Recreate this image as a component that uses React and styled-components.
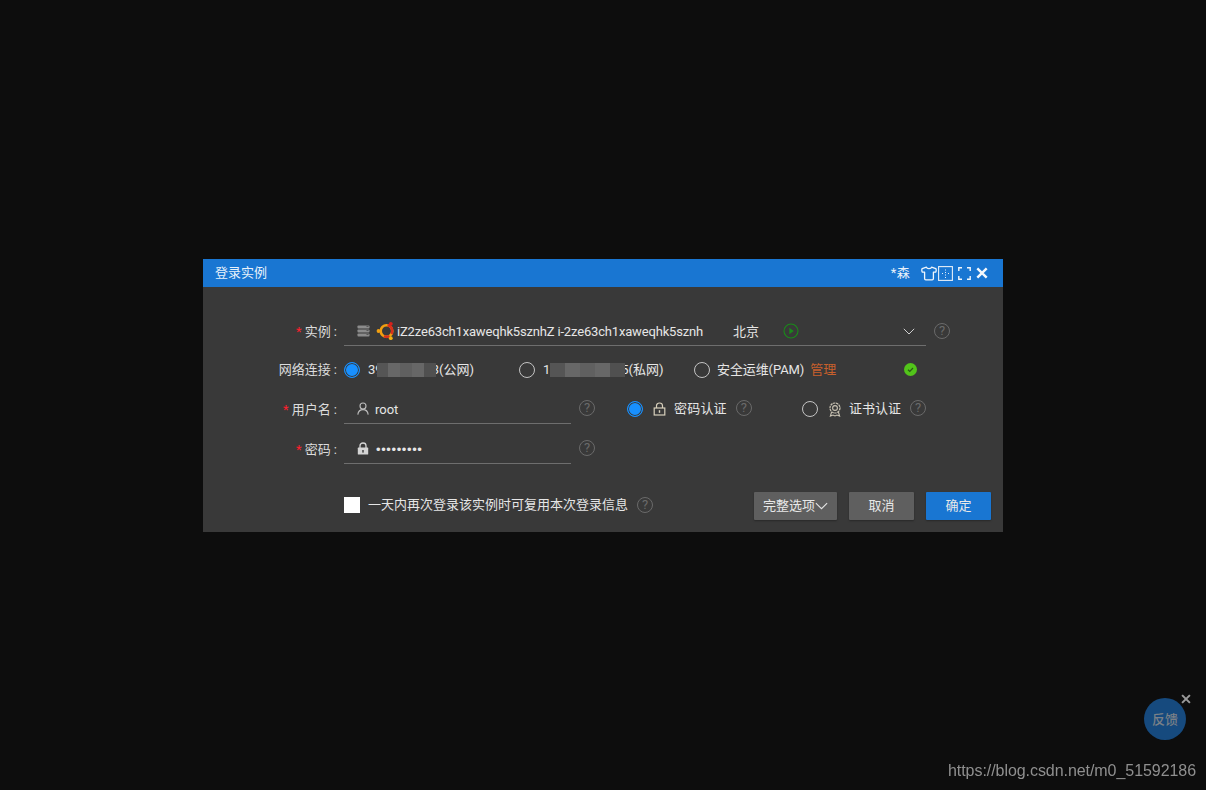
import React from "react";
import styled, { createGlobalStyle } from "styled-components";

const GlobalStyle = createGlobalStyle`
    html, body {
        margin: 0;
        padding: 0;
        height: 100%;
        background: #0d0d0d;
    }
    body {
        font-family: Roboto, "Noto Sans CJK SC", sans-serif;
        font-size: 13px;
        line-height: 18px;
        color: #e6e6e6;
    }
`;

const ServerIcon = () => (
    <svg width="13" height="12" viewBox="0 0 13 12">
        <rect x="0.5" y="0.5" width="12" height="3" rx="0.8" fill="#8c8c8c" />
        <rect x="0.5" y="4.5" width="12" height="3" rx="0.8" fill="#8c8c8c" />
        <rect x="0.5" y="8.5" width="12" height="3" rx="0.8" fill="#8c8c8c" />
        <path d="M9.5 1.5 h2 M9.5 5.5 h2 M9.5 9.5 h2" stroke="#4a4a4a" strokeWidth="0.8" />
    </svg>
);

const UbuntuIcon = () => (
    <svg width="20" height="20" viewBox="0 0 20 20">
        <circle cx="10.5" cy="10" r="5.8" fill="none" stroke="#f29f10" strokeWidth="2.6" />
        <path d="M11.5 4.3 A5.8 5.8 0 0 1 15.5 13" fill="none" stroke="#d8301c" strokeWidth="2.6" />
        <path d="M8 15.2 A5.8 5.8 0 0 0 13.5 15" fill="none" stroke="#d8301c" strokeWidth="2.6" />
        <circle cx="2.5" cy="10" r="1.9" fill="#f29f10" />
        <circle cx="14.8" cy="2.8" r="1.9" fill="#d8201c" />
        <circle cx="14.8" cy="17.2" r="1.9" fill="#f2b010" />
    </svg>
);

const PlayIcon = () => (
    <svg width="16" height="16" viewBox="0 0 16 16">
        <circle cx="8" cy="8" r="7" fill="none" stroke="#1a8a1a" strokeWidth="1.1" />
        <path d="M6.3 4.8 L10.8 8 L6.3 11.2 Z" fill="#1a8a1a" />
    </svg>
);

const Chevron = ({ size = 12, color = "#cfcfcf" }) => (
    <svg width={size} height={Math.round(size * 0.6)} viewBox="0 0 12 7">
        <path d="M0.8 0.8 L6 6 L11.2 0.8" fill="none" stroke={color} strokeWidth="1" />
    </svg>
);

const UserIcon = () => (
    <svg width="12" height="13" viewBox="0 0 12 13">
        <circle cx="6" cy="4" r="3" fill="none" stroke="#bdbdbd" strokeWidth="1.1" />
        <path d="M0.8 12.6 C1.2 9.6 3.2 7.6 6 7.6 C8.8 7.6 10.8 9.6 11.2 12.6" fill="none" stroke="#bdbdbd" strokeWidth="1.1" />
    </svg>
);

const SolidLock = () => (
    <svg width="12" height="13" viewBox="0 0 12 13">
        <path d="M3 6 V3.8 C3 2 4.3 1 6 1 C7.7 1 9 2 9 3.8 V6" fill="none" stroke="#d4d4d4" strokeWidth="1.3" />
        <rect x="0.8" y="5.6" width="10.4" height="7" rx="0.6" fill="#d4d4d4" />
        <rect x="5.3" y="8" width="1.4" height="2.6" fill="#393939" />
    </svg>
);

const OutlineLock = () => (
    <svg width="13" height="14" viewBox="0 0 13 14">
        <path d="M3.5 6 V3.8 C3.5 2 4.8 1 6.5 1 C8.2 1 9.5 2 9.5 3.8 V6" fill="none" stroke="#d8d0bc" strokeWidth="1.2" />
        <rect x="1.2" y="6" width="10.6" height="7" fill="none" stroke="#d8d0bc" strokeWidth="1.2" />
        <rect x="5.8" y="8.2" width="1.4" height="2.6" fill="#d8d0bc" />
    </svg>
);

const CertIcon = () => (
    <svg width="14" height="15" viewBox="0 0 14 15">
        <circle cx="7" cy="6" r="5" fill="none" stroke="#c8c2b2" strokeWidth="1.2" strokeDasharray="2.4 0.6" />
        <circle cx="7" cy="6" r="2.4" fill="none" stroke="#c8c2b2" strokeWidth="1.1" />
        <path d="M3.6 10 L2.4 14 L5 13 L7 14 L9 13 L11.6 14 L10.4 10" fill="none" stroke="#c8c2b2" strokeWidth="1.1" />
    </svg>
);

const CheckBadge = () => (
    <BadgeSlot>
        <svg width="13" height="13" viewBox="0 0 13 13">
            <circle cx="6.5" cy="6.5" r="6.5" fill="#52c41a" />
            <path d="M4 6.7 L5.8 8.4 L9 5" fill="none" stroke="#2a5a14" strokeWidth="1.2" />
        </svg>
    </BadgeSlot>
);

const ShirtIcon = () => (
    <svg width="16" height="15" viewBox="0 0 16 15">
        <path d="M5.4 1.2 C6 3 10 3 10.6 1.2 L14.8 2.6 C15.4 3 15.3 5.4 14.6 6.2 L12.4 6.2 V12.6 C12.4 13.4 12 13.8 11.2 13.8 H4.8 C4 13.8 3.6 13.4 3.6 12.6 V6.2 L1.4 6.2 C0.7 5.4 0.6 3 1.2 2.6 Z" fill="none" stroke="#f0f6fc" strokeWidth="1.3" strokeLinejoin="round" />
    </svg>
);

const GridIcon = () => (
    <svg width="15" height="15" viewBox="0 0 15 15">
        <rect x="0.6" y="0.6" width="13.8" height="13.8" fill="none" stroke="#e4eef8" strokeWidth="1.1" />
        <path d="M7 3.5 h1 v1 h-1 z M7 6 h1 v1 h-1 z M7 8.5 h1 v1 h-1 z M7 11 h1 v1 h-1 z M4 7 h1 v1 h-1 z M10 7 h1 v1 h-1 z" fill="#e4eef8" />
    </svg>
);

const FullscreenIcon = () => (
    <svg width="13" height="13" viewBox="0 0 13 13">
        <path d="M0.8 4 V0.8 H4 M9 0.8 H12.2 V4 M12.2 9 V12.2 H9 M4 12.2 H0.8 V9" fill="none" stroke="#f0f6fc" strokeWidth="1.4" />
    </svg>
);

const CloseIcon = ({ size = 12, color = "#f4f8fc" }) => (
    <svg width={size} height={size} viewBox="0 0 11 11">
        <path d="M1.2 1.2 L9.8 9.8 M9.8 1.2 L1.2 9.8" fill="none" stroke={color} strokeWidth="2.2" />
    </svg>
);

const Help = () => <HelpMark>?</HelpMark>;

const App = () => {
    return (
        <>
            <GlobalStyle />
            <Page>
                <Dialog>
                    <TitleBar>
                        <Title>登录实例</Title>
                        <TitleTools>
                            <Nickname>*森</Nickname>
                            <ToolSlot $left={11}><ShirtIcon /></ToolSlot>
                            <ToolSlot $left={1}><GridIcon /></ToolSlot>
                            <ToolSlot $left={5}><FullscreenIcon /></ToolSlot>
                            <ToolSlot $left={5}><CloseIcon /></ToolSlot>
                        </TitleTools>
                    </TitleBar>
                    <Body>
                        <Row $height={29}>
                            <Label $required>实例</Label>
                            <Field $width={582}>
                                <ServerIcon />
                                <UbuntuSlot><UbuntuIcon /></UbuntuSlot>
                                <InstanceName>iZ2ze63ch1xaweqhk5sznhZ i-2ze63ch1xaweqhk5sznh</InstanceName>
                                <Region>北京</Region>
                                <PlayIcon />
                                <ChevronSlot><Chevron /></ChevronSlot>
                            </Field>
                            <HelpSlot><Help /></HelpSlot>
                        </Row>
                        <Row $height={48}>
                            <Label>网络连接</Label>
                            <Option $width={175}>
                                <Radio $checked />
                                <OptionText>39<MaskBar $width={59} $before={-6} $after={-4}><i /><i /><i /><i /><i /></MaskBar>3(公网)</OptionText>
                            </Option>
                            <Option $width={175}>
                                <Radio />
                                <OptionText>1<MaskBar $width={75} $before={0} $after={-4}><i /><i /><i /><i /><i /></MaskBar>5(私网)</OptionText>
                            </Option>
                            <Option $width={210}>
                                <Radio />
                                <PamText>安全运维(PAM)</PamText>
                                <Manage>管理</Manage>
                            </Option>
                            <CheckBadge />
                        </Row>
                        <Row $height={30}>
                            <Label $required $low>用户名</Label>
                            <Field $width={227}>
                                <UserIcon />
                                <FieldValue>root</FieldValue>
                            </Field>
                            <HelpSlot><Help /></HelpSlot>
                            <AuthOption $width={175} $first>
                                <Radio $checked />
                                <AuthIcon><OutlineLock /></AuthIcon>
                                <AuthText $spread>密码认证</AuthText>
                                <Help />
                            </AuthOption>
                            <AuthOption>
                                <Radio />
                                <AuthIcon><CertIcon /></AuthIcon>
                                <AuthText $narrow>证书认证</AuthText>
                                <Help />
                            </AuthOption>
                        </Row>
                        <Row $height={30} $top={10}>
                            <Label $required $low>密码</Label>
                            <Field $width={227}>
                                <SolidLock />
                                <Dots>•••••••••</Dots>
                            </Field>
                            <HelpSlot><Help /></HelpSlot>
                        </Row>
                        <Footer>
                            <Remember>
                                <Checkbox />
                                <RememberText>一天内再次登录该实例时可复用本次登录信息</RememberText>
                                <Help />
                            </Remember>
                            <Actions>
                                <Button $width={83}>完整选项<Chevron size={13} color="#e4e4e4" /></Button>
                                <Button $width={65}>取消</Button>
                                <Button $width={65} $primary>确定</Button>
                            </Actions>
                        </Footer>
                    </Body>
                </Dialog>
            </Page>
            <Feedback>
                反馈
                <FeedbackClose><CloseIcon size={10} color="#9a9a9a" /></FeedbackClose>
            </Feedback>
            <Watermark>https://blog.csdn.net/m0_51592186</Watermark>
        </>
    );
};

export default App;

const Page = styled.div`
    min-height: 790px;
    padding-top: 259px;
    box-sizing: border-box;
    display: flex;
    justify-content: center;
    align-items: flex-start;
`;
const Dialog = styled.div`
    width: 800px;
    height: 273px;
    background: #393939;
    display: flex;
    flex-direction: column;
`;
const TitleBar = styled.div`
    height: 28px;
    background: #1976d2;
    display: flex;
    align-items: center;
    justify-content: space-between;
    padding: 0 15px 0 12px;
    color: #e8f1fa;
`;
const Title = styled.div`
    padding-bottom: 1px;
`;
const TitleTools = styled.div`
    display: flex;
    align-items: center;
`;
const ToolSlot = styled.span`
    display: flex;
    margin-left: ${(p) => p.$left}px;
`;
const Nickname = styled.span`
    padding-bottom: 1px;
    letter-spacing: 0.3px;
`;
const Body = styled.div`
    flex: 1;
    padding-top: 30px;
    display: flex;
    flex-direction: column;
`;
const Row = styled.div`
    display: flex;
    align-items: center;
    height: ${(p) => p.$height}px;
    margin-top: ${(p) => p.$top || 0}px;
`;
const Label = styled.div`
    width: 135px;
    margin-right: 6px;
    padding-top: ${(p) => (p.$low ? 2 : 0)}px;
    text-align: right;
    flex-shrink: 0;
    color: #dcdcdc;
    &::before {
        content: ${(p) => (p.$required ? '"* "' : '""')};
        color: #ff1f2d;
    }
    &::after {
        content: ":";
        margin: 0 1px 0 3px;
    }
`;
const Field = styled.div`
    width: ${(p) => p.$width}px;
    height: 100%;
    box-sizing: border-box;
    border-bottom: 1px solid #6e6e6e;
    padding-left: 13px;
    display: flex;
    align-items: center;
`;
const UbuntuSlot = styled.span`
    display: flex;
    margin-left: 6px;
`;
const InstanceName = styled.span`
    margin-left: 1px;
    padding-top: 1px;
    width: 336px;
    white-space: nowrap;
    letter-spacing: -0.17px;
`;
const Region = styled.span`
    width: 50px;
    padding-top: 1px;
`;
const ChevronSlot = styled.span`
    display: flex;
    margin-left: auto;
    margin-right: 11px;
`;
const FieldValue = styled.span`
    margin-left: 6px;
    padding-top: 3px;
`;
const Dots = styled.span`
    margin-left: 7px;
    padding-top: 3px;
    font-family: "Liberation Sans", sans-serif;
    font-size: 13px;
    letter-spacing: 0.62px;
`;
const HelpSlot = styled.span`
    display: flex;
    margin: 0 0 2px 8px;
`;
const HelpMark = styled.span`
    width: 16px;
    height: 16px;
    box-sizing: border-box;
    flex-shrink: 0;
    border: 1.4px solid #6a6a6a;
    border-radius: 50%;
    color: #6a6a6a;
    font-size: 13px;
    line-height: 14px;
    text-align: center;
`;
const BadgeSlot = styled.span`
    display: flex;
    margin-bottom: 2px;
`;
const Option = styled.div`
    width: ${(p) => p.$width}px;
    display: flex;
    align-items: center;
    flex-shrink: 0;
`;
const AuthOption = styled.div`
    ${(p) => (p.$width ? `width: ${p.$width}px;` : "")}
    margin-left: ${(p) => (p.$first ? "32px" : "0")};
    display: flex;
    align-items: center;
    flex-shrink: 0;
    ${HelpMark} {
        margin-bottom: 2px;
    }
`;
const AuthIcon = styled.span`
    display: flex;
    margin-left: 10px;
`;
const AuthText = styled.span`
    margin: 0 9px 1px ${(p) => (p.$narrow ? 7 : 8)}px;
    letter-spacing: ${(p) => (p.$spread ? "0.2px" : "0")};
`;
const Radio = styled.span`
    width: 16px;
    height: 16px;
    box-sizing: border-box;
    flex-shrink: 0;
    border-radius: 50%;
    border: 1.3px solid ${(p) => (p.$checked ? "#1890ff" : "#c4c4c4")};
    background: ${(p) => (p.$checked ? "#1890ff" : "transparent")};
    box-shadow: ${(p) => (p.$checked ? "inset 0 0 0 1px #393939" : "none")};
`;
const OptionText = styled.span`
    margin-left: 8px;
    white-space: nowrap;
`;
const PamText = styled(OptionText)`
    margin-left: 7px;
    letter-spacing: -0.1px;
`;
const MaskBar = styled.span`
    position: relative;
    display: inline-flex;
    width: ${(p) => p.$width}px;
    height: 14px;
    margin-left: ${(p) => p.$before}px;
    margin-right: ${(p) => p.$after}px;
    vertical-align: -3px;
    filter: blur(0.5px);
    i {
        flex: 1;
        background: #606060;
    }
    i:nth-child(2n) {
        background: #676767;
    }
    i:first-child {
        background: #555;
    }
    i:last-child {
        background: #505050;
    }
`;
const Manage = styled.span`
    margin-left: 6px;
    color: #c8602c;
`;
const Footer = styled.div`
    margin-top: 28px;
    padding: 0 12px 12px 141px;
    display: flex;
    align-items: center;
    justify-content: space-between;
`;
const Remember = styled.div`
    display: flex;
    align-items: center;
    margin-bottom: 2px;
    ${HelpMark} {
        margin-left: 9px;
    }
`;
const Checkbox = styled.span`
    width: 16px;
    height: 16px;
    background: #fff;
    flex-shrink: 0;
`;
const RememberText = styled.span`
    margin-left: 8px;
`;
const Actions = styled.div`
    display: flex;
    gap: 12px;
`;
const Button = styled.button`
    width: ${(p) => p.$width}px;
    height: 28px;
    padding: 0 0 1px;
    border: 0;
    border-radius: 1px;
    font: inherit;
    color: #e8e8e8;
    background: ${(p) => (p.$primary ? "#1976d2" : "#5f5f5f")};
    box-shadow: 0 1px 2px rgba(0, 0, 0, 0.3);
    display: flex;
    align-items: center;
    justify-content: center;
`;
const Feedback = styled.div`
    position: fixed;
    left: 1144px;
    top: 698px;
    width: 42px;
    height: 42px;
    border-radius: 50%;
    background: #164a7e;
    color: #7a8087;
    font-size: 13px;
    font-weight: 500;
    line-height: 44px;
    text-align: center;
`;
const FeedbackClose = styled.span`
    position: absolute;
    left: 37px;
    top: -4px;
    display: flex;
`;
const Watermark = styled.div`
    position: fixed;
    right: 10px;
    top: 761px;
    font-family: "Liberation Sans", sans-serif;
    font-size: 16px;
    letter-spacing: -0.06px;
    line-height: 20px;
    color: #8f8f8f;
`;
